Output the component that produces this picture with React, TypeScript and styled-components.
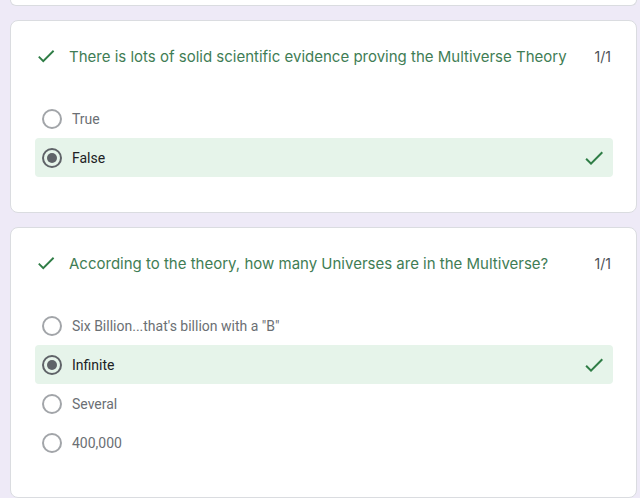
import React from "react";
import styled, { createGlobalStyle } from "styled-components";

const Global = createGlobalStyle`
  html, body { margin: 0; padding: 0; background: #eeeaf7; }
  body { font-family: Roboto, "Liberation Sans", sans-serif; }
`;

const Page = styled.div`
  display: flex;
  flex-direction: column;
  gap: 14px;
  padding: 0 3px 0 10px;
  height: 498px;
  overflow: hidden;
  box-sizing: border-box;
`;

const Card = styled.section<{ $cut?: boolean }>`
  background: #ffffff;
  border: 1px solid #dadce0;
  border-radius: 8px;
  box-sizing: border-box;
  padding: 22px 23px 35px 24px;
  ${(p) =>
    p.$cut &&
    `
    height: 6px;
    padding: 0;
    border-top: none;
    border-top-left-radius: 0;
    border-top-right-radius: 0;
    flex-shrink: 0;
  `}
`;

const Header = styled.div`
  display: flex;
  align-items: center;
  height: 26px;
`;

const Title = styled.div`
  flex: 1;
  margin-left: 12px;
  font-family: Inter, "Open Sans", sans-serif;
  font-size: 15px;
  color: #3f7d55;
`;

const Score = styled.div`
  font-family: Inter, "Open Sans", sans-serif;
  font-size: 14px;
  color: #4d5156;
  margin-right: 2px;
`;

const Options = styled.div`
  display: flex;
  flex-direction: column;
  margin-top: 30px;
`;

const Row = styled.div<{ $sel?: boolean }>`
  display: flex;
  align-items: center;
  height: 39px;
  padding: 0 7px;
  border-radius: 4px;
  background: ${(p) => (p.$sel ? "#e6f4ea" : "transparent")};
`;

const Radio = styled.span<{ $sel?: boolean }>`
  width: 20px;
  height: 20px;
  box-sizing: border-box;
  border-radius: 50%;
  border: 2px solid ${(p) => (p.$sel ? "#5f6368" : "#a2a5a9")};
  display: flex;
  align-items: center;
  justify-content: center;
  flex-shrink: 0;
  &::after {
    content: "";
    display: ${(p) => (p.$sel ? "block" : "none")};
    width: 10px;
    height: 10px;
    border-radius: 50%;
    background: #5f6368;
  }
`;

const Label = styled.span<{ $sel?: boolean }>`
  flex: 1;
  margin-left: 10px;
  font-size: 14px;
  color: ${(p) => (p.$sel ? "#202124" : "#6b6f74")};
`;

const Check = ({ size = 24 }: { size?: number }) => (
  <svg width={size} height={size} viewBox="0 0 24 24" fill="#2f7d46">
    <path d="M9 16.17L4.83 12l-1.42 1.41L9 19 21 7l-1.41-1.41z" />
  </svg>
);

type Q = { title: string; options: string[]; answer: number };

const questions: Q[] = [
  {
    title: "There is lots of solid scientific evidence proving the Multiverse Theory",
    options: ["True", "False"],
    answer: 1,
  },
  {
    title: "According to the theory, how many Universes are in the Multiverse?",
    options: ['Six Billion...that\'s billion with a "B"', "Infinite", "Several", "400,000"],
    answer: 1,
  },
];

export default function App() {
  return (
    <>
      <Global />
      <Page>
        <Card $cut />
        {questions.map((q, i) => (
          <Card key={i}>
            <Header>
              <Check size={22} />
              <Title>{q.title}</Title>
              <Score>1/1</Score>
            </Header>
            <Options>
              {q.options.map((o, j) => (
                <Row key={j} $sel={j === q.answer}>
                  <Radio $sel={j === q.answer} />
                  <Label $sel={j === q.answer}>{o}</Label>
                  {j === q.answer && <Check size={24} />}
                </Row>
              ))}
            </Options>
          </Card>
        ))}
      </Page>
    </>
  );
}
